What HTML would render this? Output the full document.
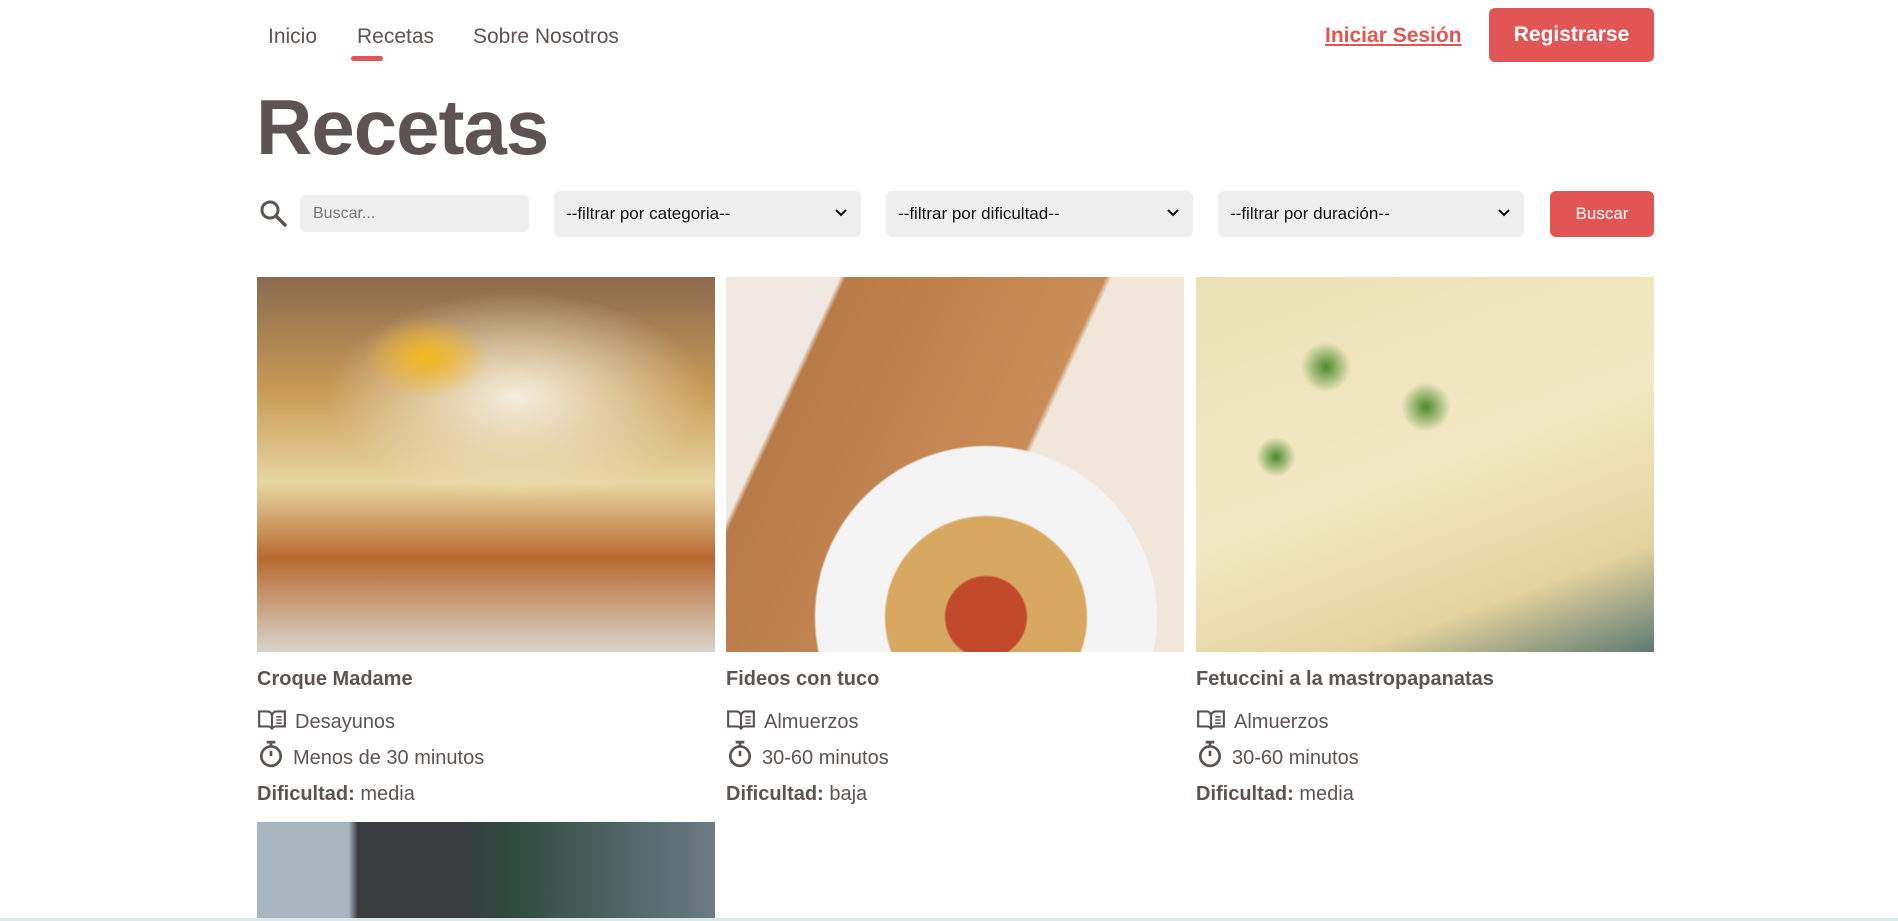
<!DOCTYPE html>
<html><head><meta charset="utf-8"><style>
*{margin:0;padding:0;box-sizing:border-box}
body{width:1898px;height:921px;overflow:hidden;background:#fff;font-family:"Liberation Sans",sans-serif;color:#5e5353;position:relative}
.a{position:absolute;white-space:nowrap}
.nav{font-size:21px;top:25px;color:#5e5353}
.sel{position:absolute;top:191px;height:46px;background:#efefef;border-radius:6px;font-size:17px;color:#111;padding:13px 12px}
.sel svg{position:absolute;right:14px;top:18px}
.img{position:absolute;top:277px;height:375px;width:458px}
.t{font-size:20px;font-weight:bold;top:668px}
.l{font-size:20px;font-weight:300}
.ic{display:inline-block;vertical-align:-4px;margin-right:8px}
</style></head><body>
<div class="a nav" style="left:268px">Inicio</div>
<div class="a nav" style="left:357px">Recetas</div>
<div class="a" style="left:351px;top:56px;width:32px;height:5px;border-radius:3px;background:#e25555"></div>
<div class="a nav" style="left:473px">Sobre Nosotros</div>
<div class="a" style="left:1325px;top:24px;font-size:21px;font-weight:bold;color:#e25555;text-decoration:underline">Iniciar Sesión</div>
<div class="a" style="left:1489px;top:8px;width:165px;height:54px;border-radius:6px;background:#e25555;color:#fff;font-size:21px;font-weight:bold;text-align:center;line-height:54px">Registrarse</div>
<div class="a" style="left:256px;top:82px;font-size:78px;font-weight:bold;color:#5e5353;letter-spacing:-1px">Recetas</div>
<svg class="a" style="left:259px;top:199px" width="28" height="28" viewBox="0 0 28 28"><circle cx="11" cy="11" r="8" fill="none" stroke="#5e5353" stroke-width="3"/><path d="M17 17L26 26" stroke="#5e5353" stroke-width="3.5" stroke-linecap="round"/></svg>
<div class="a" style="left:300px;top:195px;width:229px;height:37px;background:#efefef;border-radius:6px;font-size:16px;color:#777;padding:10px 13px">Buscar...</div>
<div class="sel" style="left:554px;width:307px">--filtrar por categoria--<svg width="12" height="8"><path d="M1 1l5 5 5-5" stroke="#111" stroke-width="2" fill="none"/></svg></div>
<div class="sel" style="left:886px;width:307px">--filtrar por dificultad--<svg width="12" height="8"><path d="M1 1l5 5 5-5" stroke="#111" stroke-width="2" fill="none"/></svg></div>
<div class="sel" style="left:1218px;width:306px">--filtrar por duración--<svg width="12" height="8"><path d="M1 1l5 5 5-5" stroke="#111" stroke-width="2" fill="none"/></svg></div>
<div class="a" style="left:1550px;top:191px;width:104px;height:46px;background:#e25555;border-radius:6px;color:#fff;font-size:17px;text-align:center;line-height:46px">Buscar</div>

<div class="img" style="left:257px;background:radial-gradient(ellipse 70px 45px at 170px 80px,#f5b71a,transparent 90%),radial-gradient(ellipse 200px 110px at 260px 120px,#f3eedc,transparent 95%),linear-gradient(180deg,#8a6a50 0%,#c89a55 30%,#e8d6a0 55%,#b86a30 75%,#d9d4cc 100%)"></div>
<div class="img" style="left:726px;background:radial-gradient(circle 150px at 260px 340px,#c24a2a 0 40px,#d9a860 42px 100px,#f4f4f4 102px 170px,transparent 172px),linear-gradient(115deg,#efe9e2 0 18%,#b87b48 19%,#c98d58 60%,#f0e6da 61%)"></div>
<div class="img" style="left:1196px;background:radial-gradient(circle 25px at 130px 90px,#4a8a2a,transparent),radial-gradient(circle 25px at 230px 130px,#4a8a2a,transparent),radial-gradient(circle 20px at 80px 180px,#4a8a2a,transparent),linear-gradient(160deg,#ebe1b8,#f2e9c4 50%,#e3d39e 80%,#5f7a72)"></div>
<div class="img" style="left:257px;top:822px;height:99px;background:linear-gradient(90deg,#a9b6c2 0 20%,#3a3c40 22% 45%,#2f4a3e 55%,#6c7a85 100%)"></div>

<div class="a t" style="left:257px">Croque Madame</div>
<div class="a t" style="left:726px">Fideos con tuco</div>
<div class="a t" style="left:1196px">Fetuccini a la mastropapanatas</div>

<div class="a" style="left:257px;top:704px;line-height:36px">
<div class="l"><svg class="ic" width="30" height="24" viewBox="0 0 28 22"><path d="M2 3h8c2 0 4 2 4 4v13c0-2-2-3-4-3H2zM26 3h-8c-2 0-4 2-4 4v13c0-2 2-3 4-3h8z" fill="none" stroke="#5e5353" stroke-width="2"/><path d="M18 8h5M18 11h5M18 14h5" stroke="#5e5353" stroke-width="1.5"/></svg>Desayunos</div>
<div class="l"><svg class="ic" width="28" height="28" viewBox="0 0 26 26"><circle cx="13" cy="15" r="9" fill="none" stroke="#5e5353" stroke-width="2.5"/><path d="M9 2h8M13 2v4M13 15V10" stroke="#5e5353" stroke-width="2.5"/></svg>Menos de 30 minutos</div>
<div class="l"><b style="font-weight:bold">Dificultad:</b> media</div></div>
<div class="a" style="left:726px;top:704px;line-height:36px">
<div class="l"><svg class="ic" width="30" height="24" viewBox="0 0 28 22"><path d="M2 3h8c2 0 4 2 4 4v13c0-2-2-3-4-3H2zM26 3h-8c-2 0-4 2-4 4v13c0-2 2-3 4-3h8z" fill="none" stroke="#5e5353" stroke-width="2"/><path d="M18 8h5M18 11h5M18 14h5" stroke="#5e5353" stroke-width="1.5"/></svg>Almuerzos</div>
<div class="l"><svg class="ic" width="28" height="28" viewBox="0 0 26 26"><circle cx="13" cy="15" r="9" fill="none" stroke="#5e5353" stroke-width="2.5"/><path d="M9 2h8M13 2v4M13 15V10" stroke="#5e5353" stroke-width="2.5"/></svg>30-60 minutos</div>
<div class="l"><b style="font-weight:bold">Dificultad:</b> baja</div></div>
<div class="a" style="left:1196px;top:704px;line-height:36px">
<div class="l"><svg class="ic" width="30" height="24" viewBox="0 0 28 22"><path d="M2 3h8c2 0 4 2 4 4v13c0-2-2-3-4-3H2zM26 3h-8c-2 0-4 2-4 4v13c0-2 2-3 4-3h8z" fill="none" stroke="#5e5353" stroke-width="2"/><path d="M18 8h5M18 11h5M18 14h5" stroke="#5e5353" stroke-width="1.5"/></svg>Almuerzos</div>
<div class="l"><svg class="ic" width="28" height="28" viewBox="0 0 26 26"><circle cx="13" cy="15" r="9" fill="none" stroke="#5e5353" stroke-width="2.5"/><path d="M9 2h8M13 2v4M13 15V10" stroke="#5e5353" stroke-width="2.5"/></svg>30-60 minutos</div>
<div class="l"><b style="font-weight:bold">Dificultad:</b> media</div></div>
<div class="a" style="left:0;top:918px;width:1898px;height:3px;background:#dde8e8"></div>
</body></html>
